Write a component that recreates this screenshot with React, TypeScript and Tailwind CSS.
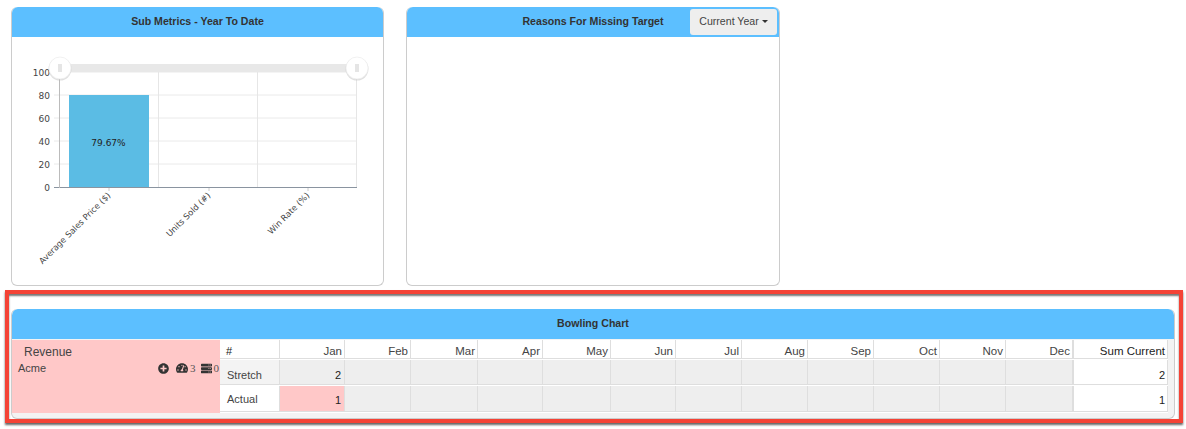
import { FaPlusCircle, FaTachometerAlt, FaServer } from 'react-icons/fa';

const FONT = "font-['Liberation_Sans',Arial,sans-serif]";
const MONTHS = ['Jan', 'Feb', 'Mar', 'Apr', 'May', 'Jun', 'Jul', 'Aug', 'Sep', 'Oct', 'Nov', 'Dec'];
const GRID = 'grid grid-cols-[60px_65px_66px_67px_65px_68px_65px_66px_66px_66px_66px_66px_67px_95px]';
const CELL = 'border-r border-b border-[#dedede] text-right pr-[2px]';

const PanelHeader = ({ title }: { title: string }) => (
   <div className="h-[30px] pb-[1px] bg-[#5cbfff] rounded-t-[6px] flex items-center justify-center text-[10.6px] font-bold text-[#333]">
      {title}
   </div>
);

const SliderHandle = ({ cx }: { cx: number }) => (
   <g>
      <circle cx={cx} cy={69} r={11.5} fill="#bbb" opacity={0.45} />
      <circle cx={cx} cy={68} r={11} fill="#fff" stroke="#ececec" strokeWidth={0.75} />
      <rect x={cx - 1.5} y={64} width={1} height={8} fill="#ccc" />
      <rect x={cx + 0.5} y={64} width={1} height={8} fill="#ccc" />
   </g>
);

// coordenadas del svg = coordenadas de la página menos el borde del panel
const SubMetricsChart = () => {
   const ticks = [
      { label: '100', y: 72 },
      { label: '80', y: 95 },
      { label: '60', y: 118 },
      { label: '40', y: 141 },
      { label: '20', y: 164 },
      { label: '0', y: 187.5 },
   ];
   const labels = [
      { text: 'Average Sales Price ($)', x: 111, y: 196 },
      { text: 'Units Sold (#)', x: 211, y: 196 },
      { text: 'Win Rate (%)', x: 310, y: 196 },
   ];
   const font = "'DejaVu Sans', sans-serif";

   return (
      <svg width={372} height={248} viewBox="12 37 372 248" className="block">
         {ticks.map(t => (
            <g key={t.label}>
               <line x1={54} x2={357} y1={t.y} y2={t.y} stroke={t.label === '0' ? '#8a94a0' : '#eaeaea'} />
               <text x={50} y={t.y + 3.5} textAnchor="end" fontSize={9} fill="#444" fontFamily={font}>
                  {t.label}
               </text>
            </g>
         ))}
         {[158.5, 257.5, 356.5].map(x => (
            <line key={x} x1={x} x2={x} y1={72} y2={187} stroke="#e6e6e6" />
         ))}
         <line x1={59.5} x2={59.5} y1={72} y2={188} stroke="#bbb" />
         <rect x={69} y={95} width={80} height={92} fill="#5bbce4" />
         <text x={108.5} y={146} textAnchor="middle" fontSize={9} fill="#222" fontFamily={font}>
            79.67%
         </text>
         {labels.map(l => (
            <g key={l.text}>
               <line x1={l.x - 2} x2={l.x - 2} y1={188} y2={191} stroke="#ccc" />
               <text
                  x={l.x}
                  y={l.y}
                  textAnchor="end"
                  fontSize={8.4}
                  fill="#444"
                  fontFamily={font}
                  transform={`rotate(-45 ${l.x} ${l.y})`}
               >
                  {l.text}
               </text>
            </g>
         ))}
         <rect x={60} y={64} width={297} height={8} fill="#e8e8e8" />
         <SliderHandle cx={60} />
         <SliderHandle cx={357} />
      </svg>
   );
};

const BowlingTable = () => (
   <div className={`${GRID} text-[11px] leading-[14px] text-[#444] bg-white`}>
      <div className="h-[19px] border-r border-b border-[#dedede] pl-[6px] pt-[4px] text-[#222]">#</div>
      {MONTHS.map(m => (
         <div key={m} className={`${CELL} h-[19px] pt-[4px] text-[11.5px]`}>
            {m}
         </div>
      ))}
      <div className={`${CELL} h-[19px] pt-[4px] text-[11.5px] border-l text-[#222]`}>Sum Current</div>

      <div className="h-[25px] border-r border-b border-[#dedede] pl-[7px] pt-[8px] bg-[#f3f3f3]">Stretch</div>
      {MONTHS.map(m => (
         <div key={m} className={`${CELL} h-[25px] pt-[8px] pr-[3px] bg-[#eee] text-[#222]`}>
            {m === 'Jan' ? '2' : ''}
         </div>
      ))}
      <div className={`${CELL} h-[25px] pt-[8px] border-l text-[#222]`}>2</div>

      <div className="h-[26px] border-r border-b border-[#dedede] pl-[7px] pt-[6px]">Actual</div>
      {MONTHS.map(m => (
         <div
            key={m}
            className={`${CELL} h-[26px] pt-[7px] pr-[3px] text-[#222] ${m === 'Jan' ? 'bg-[#ffc8c8]' : 'bg-[#eee]'}`}
         >
            {m === 'Jan' ? '1' : ''}
         </div>
      ))}
      <div className={`${CELL} h-[26px] pt-[7px] border-l text-[#222]`}>1</div>
   </div>
);

export default function App() {
   return (
      <div className={`${FONT} w-[1186px] h-[429px] bg-white overflow-hidden pt-[7px]`}>
         <div className="flex gap-[22px] pl-[11px]">
            <div className="w-[373px] h-[279px] rounded-[6px] border border-[#ccc] border-t-0 bg-white">
               <PanelHeader title="Sub Metrics - Year To Date" />
               <SubMetricsChart />
            </div>
            <div className="w-[374px] h-[279px] rounded-[6px] border border-[#ccc] border-t-0 bg-white">
               <div className="relative">
                  <PanelHeader title="Reasons For Missing Target" />
                  <button className="absolute right-[2px] top-[2px] h-[26px] w-[87px] pb-[1px] bg-[#eee] rounded-[3px] text-[10.6px] text-[#444] flex items-center justify-center gap-[3px]">
                     Current Year
                     <span className="w-0 h-0 border-x-[3px] border-x-transparent border-t-[3px] border-t-[#333]" />
                  </button>
               </div>
            </div>
         </div>

         <div className="ml-[5px] mt-[4px] w-[1178px] h-[133px] border-[4px] border-[#f44336] shadow-[0_2px_2px_#666,inset_0_2px_2px_#777] bg-white pt-[15px] pl-[2px] overflow-hidden">
            <div className="w-[1164px] h-[110px] rounded-[6px] border border-[#ccc] border-t-0 bg-[#f3f3f3] overflow-hidden">
               <PanelHeader title="Bowling Chart" />
               <div className="flex pt-[1px] bg-[#f3f3f3]">
                  <div className="w-[208px] h-[73px] bg-[#ffc8c8] text-[#444]">
                     <div className="pl-[12px] pt-[4px] text-[12px] leading-[16px]">Revenue</div>
                     <div className="flex items-center pl-[6px] pr-[1px] pt-[1px] text-[11px] leading-[14px]">
                        <span>Acme</span>
                        <span className="ml-auto flex items-center text-[#333]">
                           <FaPlusCircle size={11} />
                           <FaTachometerAlt size={12} className="ml-[7px]" />
                           <span className="ml-[2px] font-['Liberation_Serif',serif] text-[#555]">3</span>
                           <FaServer size={11} className="ml-[5px]" />
                           <span className="ml-[2px] font-['Liberation_Serif',serif] text-[#555]">0</span>
                        </span>
                     </div>
                  </div>
                  <BowlingTable />
               </div>
            </div>
         </div>
      </div>
   );
}
